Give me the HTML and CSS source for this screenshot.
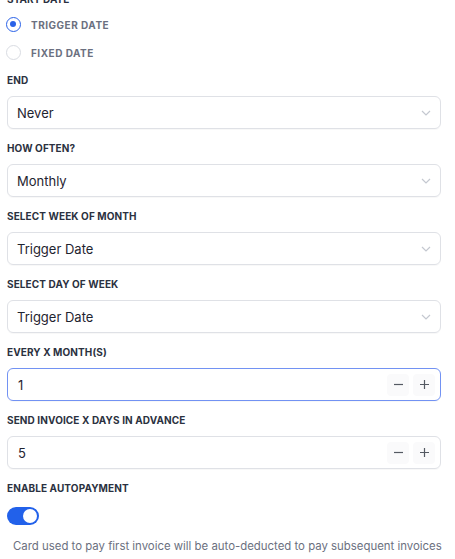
FILE: index.html
```html
<!DOCTYPE html>
<html>
<head>
<meta charset="utf-8">
<link rel="stylesheet" href="styles.css">
</head>
<body>
<div class="form">
  <div class="label cut">START DATE</div>
  <div class="radios">
    <label class="radio"><span class="dot checked"></span><span class="rtext">TRIGGER DATE</span></label>
    <label class="radio"><span class="dot"></span><span class="rtext">FIXED DATE</span></label>
  </div>

  <div class="field first">
    <div class="label">END</div>
    <div class="box select"><span>Never</span><svg class="chev" width="10" height="6" viewBox="0 0 10 6"><path d="M1 1l4 4 4-4" fill="none" stroke="#c4c8d0" stroke-width="1.2"/></svg></div>
  </div>
  <div class="field">
    <div class="label">HOW OFTEN?</div>
    <div class="box select"><span>Monthly</span><svg class="chev" width="10" height="6" viewBox="0 0 10 6"><path d="M1 1l4 4 4-4" fill="none" stroke="#c4c8d0" stroke-width="1.2"/></svg></div>
  </div>
  <div class="field">
    <div class="label">SELECT WEEK OF MONTH</div>
    <div class="box select"><span>Trigger Date</span><svg class="chev" width="10" height="6" viewBox="0 0 10 6"><path d="M1 1l4 4 4-4" fill="none" stroke="#c4c8d0" stroke-width="1.2"/></svg></div>
  </div>
  <div class="field">
    <div class="label">SELECT DAY OF WEEK</div>
    <div class="box select"><span>Trigger Date</span><svg class="chev" width="10" height="6" viewBox="0 0 10 6"><path d="M1 1l4 4 4-4" fill="none" stroke="#c4c8d0" stroke-width="1.2"/></svg></div>
  </div>
  <div class="field">
    <div class="label">EVERY X MONTH(S)</div>
    <div class="box num focus"><span class="val">1</span>
      <span class="steps"><span class="step"><svg width="11" height="11" viewBox="0 0 11 11"><path d="M1 5.5h9" stroke="#555a63" stroke-width="1.2"/></svg></span><span class="step"><svg width="11" height="11" viewBox="0 0 11 11"><path d="M1 5.5h9M5.5 1v9" stroke="#555a63" stroke-width="1.2"/></svg></span></span>
    </div>
  </div>
  <div class="field">
    <div class="label">SEND INVOICE X DAYS IN ADVANCE</div>
    <div class="box num"><span class="val">5</span>
      <span class="steps"><span class="step"><svg width="11" height="11" viewBox="0 0 11 11"><path d="M1 5.5h9" stroke="#555a63" stroke-width="1.2"/></svg></span><span class="step"><svg width="11" height="11" viewBox="0 0 11 11"><path d="M1 5.5h9M5.5 1v9" stroke="#555a63" stroke-width="1.2"/></svg></span></span>
    </div>
  </div>
  <div class="field">
    <div class="label toggle-label">ENABLE AUTOPAYMENT</div>
    <div class="toggle"><span class="knob"></span></div>
    <p class="note">Card used to pay first invoice will be auto-deducted to pay subsequent invoices</p>
  </div>
</div>
</body>
</html>
```

FILE: styles.css
```css
* { box-sizing: border-box; }
body {
  margin: 0;
  background: #ffffff;
  font-family: Inter, "Noto Sans", sans-serif;
  color: #1f2430;
}
.form {
  width: 441px;
  padding: 0 0 0 7px;
  margin-top: -7px;
}
.label {
  font-size: 10px;
  font-weight: 700;
  color: #2b3140;
  letter-spacing: 0.1px;
  line-height: 12px;
}
.radios {
  display: flex;
  flex-direction: column;
  gap: 13px;
  margin-top: 12px;
}
.radio {
  display: flex;
  align-items: center;
  gap: 10px;
}
.dot {
  width: 15px;
  height: 15px;
  border-radius: 50%;
  border: 1px solid #d9dce2;
  background: #fff;
  position: relative;
  margin-left: -1px;
}
.dot.checked {
  border: 1.5px solid #2a62e8;
}
.dot.checked::after {
  content: "";
  position: absolute;
  left: 3px;
  top: 3px;
  width: 6px;
  height: 6px;
  border-radius: 50%;
  background: #2a62e8;
}
.rtext {
  font-size: 10px;
  font-weight: 700;
  color: #6b7080;
  letter-spacing: 0.5px;
}
.field {
  margin-top: 13px;
}
.field.first {
  margin-top: 14px;
}
.field .label {
  margin-bottom: 10px;
}
.field .toggle-label {
  margin-bottom: 13px;
}
.box {
  height: 33px;
  border: 1px solid #dfe1e6;
  border-radius: 6px;
  display: flex;
  align-items: center;
  justify-content: space-between;
  padding: 0 9px 0 9px;
  font-size: 13px;
  color: #1f2430;
  box-shadow: 0 1px 1px rgba(0,0,0,0.03);
}
.num { padding-left: 10px; padding-right: 5px; }
.focus {
  border: 1.5px solid #7292f3;
}
.steps {
  display: flex;
  gap: 4px;
}
.step {
  width: 22px;
  height: 22px;
  border-radius: 4px;
  background: #fafafb;
  display: flex;
  align-items: center;
  justify-content: center;
}
.toggle {
  width: 32px;
  height: 18px;
  border-radius: 9px;
  background: #2261ea;
  position: relative;
}
.knob {
  position: absolute;
  right: 2px;
  top: 2px;
  width: 14px;
  height: 14px;
  border-radius: 50%;
  background: #fff;
}
.note {
  margin: 14px 0 0 6px;
  font-size: 11.4px;
  line-height: 15px;
  color: #6b7080;
  white-space: nowrap;
}
```
